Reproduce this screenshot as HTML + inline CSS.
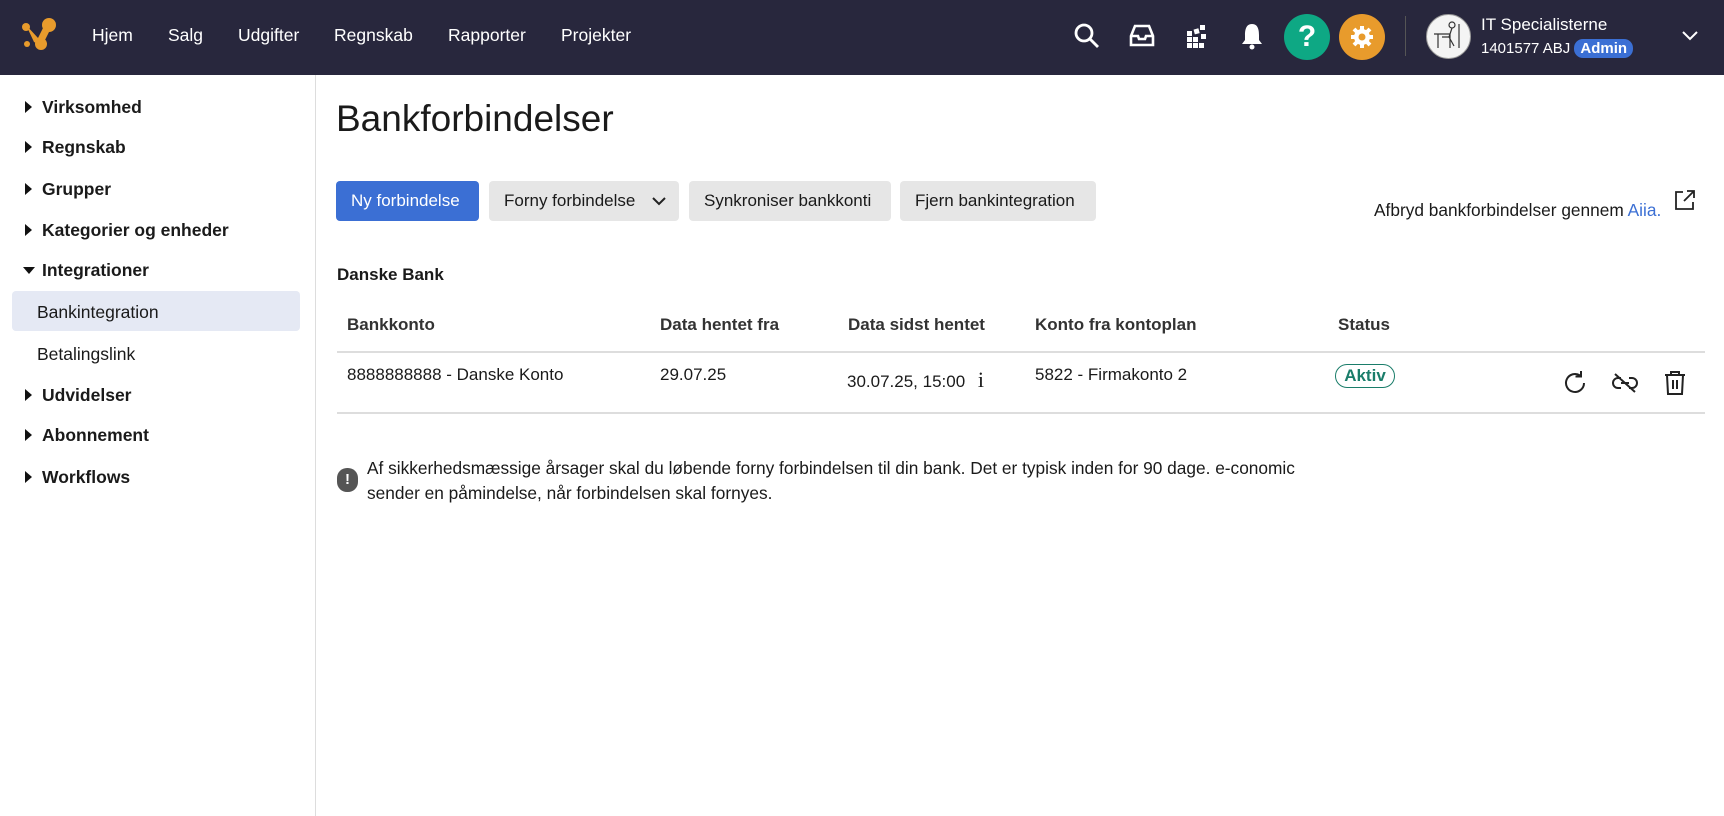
<!DOCTYPE html>
<html><head><meta charset="utf-8"><style>
*{box-sizing:border-box;margin:0;padding:0}
body{width:1724px;height:816px;overflow:hidden;background:#fff;font-family:"Liberation Sans",Arial,sans-serif;color:#1a1a1a;position:relative}
.hdr{position:absolute;left:0;top:0;width:1724px;height:75px;background:#28273d}
.abs{position:absolute;white-space:nowrap}
.nav{color:#fff;font-size:17.5px;top:25px}
.side{position:absolute;left:0;top:75px;width:316px;height:741px;border-right:1px solid #ddd}
.si{position:absolute;left:42px;font-size:17.5px;font-weight:bold}
.tri{position:absolute;left:25px;width:0;height:0;border-top:6px solid transparent;border-bottom:6px solid transparent;border-left:7px solid #111}
.btn{position:absolute;top:181px;height:40px;border-radius:4px;background:#e6e6e6;font-size:17px;line-height:40px;padding-left:15px;color:#1a1a1a}
.th{position:absolute;top:315px;font-size:17px;font-weight:bold;color:#333}
.td{position:absolute;top:365px;font-size:17px}
</style></head><body>
<div class="hdr">
<svg class="abs" style="left:20px;top:16px" width="40" height="40" viewBox="0 0 40 40"><g fill="#e89b2c"><circle cx="29" cy="9" r="7"/><circle cx="21" cy="28" r="6"/><circle cx="6" cy="11" r="4"/><circle cx="7" cy="28" r="3"/><path d="M6 9 L18 22 L26 6 L31 12 L22 30 L14 26 Z"/></g></svg>
<div class="abs nav" style="left:92px">Hjem</div>
<div class="abs nav" style="left:168px">Salg</div>
<div class="abs nav" style="left:238px">Udgifter</div>
<div class="abs nav" style="left:334px">Regnskab</div>
<div class="abs nav" style="left:448px">Rapporter</div>
<div class="abs nav" style="left:561px">Projekter</div>
<svg class="abs" style="left:1074px;top:23px" width="26" height="26" viewBox="0 0 26 26" fill="none" stroke="#fff" stroke-width="2.8"><circle cx="10" cy="10" r="8"/><path d="M16 16 L24 24"/></svg>
<svg class="abs" style="left:1129px;top:24px" width="26" height="24" viewBox="0 0 26 24" fill="none" stroke="#fff" stroke-width="2.6"><path d="M6 2 H20 L24 12 V21 H2 V12 Z M2 12 H9 L10 15 H16 L17 12 H24"/></svg>
<svg class="abs" style="left:1186px;top:24px" width="24" height="26" viewBox="0 0 24 26" fill="#fff"><rect x="1" y="7" width="5" height="5"/><rect x="1" y="13" width="5" height="5"/><rect x="1" y="19" width="5" height="5"/><rect x="7" y="13" width="5" height="5"/><rect x="7" y="19" width="5" height="5"/><rect x="13" y="19" width="5" height="5"/><rect x="8" y="5" width="5" height="5" transform="rotate(-15 10 7)"/><rect x="14" y="1" width="5" height="5"/><rect x="15" y="10" width="5" height="5"/></svg>
<svg class="abs" style="left:1241px;top:22px" width="22" height="28" viewBox="0 0 22 28" fill="#fff"><path d="M11 2 C5 2 4 8 4 13 V18 L1 22 H21 L18 18 V13 C18 8 17 2 11 2Z"/><circle cx="11" cy="25" r="2.5"/></svg>
<div class="abs" style="left:1284px;top:14px;width:46px;height:46px;border-radius:50%;background:#0ea884;color:#fff;font-weight:bold;font-size:30px;text-align:center;line-height:46px">?</div>
<div class="abs" style="left:1339px;top:14px;width:46px;height:46px;border-radius:50%;background:#e89b2c"></div>
<svg class="abs" style="left:1350px;top:25px" width="24" height="24" viewBox="0 0 24 24"><g fill="#fff"><circle cx="12" cy="12" r="8"/><g stroke="#fff" stroke-width="4"><path d="M12 1V23M1 12H23M4 4L20 20M20 4L4 20"/></g></g><circle cx="12" cy="12" r="3.5" fill="#e89b2c"/></svg>
<div class="abs" style="left:1405px;top:16px;width:1px;height:40px;background:#555"></div>
<div class="abs" style="left:1426px;top:14px;width:45px;height:45px;border-radius:50%;background:#f4f4f4;border:1px solid #999"></div>
<svg class="abs" style="left:1432px;top:20px" width="34" height="30" viewBox="0 0 34 30" fill="none" stroke="#333" stroke-width="1.2"><circle cx="20" cy="5" r="3"/><path d="M20 8 L17 17 H10 M17 17 L22 26 M2 14 H18 V28 M27 4 V28 M6 14 V28"/></svg>
<div class="abs" style="left:1481px;top:15px;color:#fff;font-size:17px">IT Specialisterne</div>
<div class="abs" style="left:1481px;top:40px;color:#fff;font-size:15px">1401577 ABJ <span style="background:#3b6fd4;border-radius:9px;padding:1px 6px;font-weight:bold">Admin</span></div>
<svg class="abs" style="left:1681px;top:30px" width="18" height="12" viewBox="0 0 18 12" fill="none" stroke="#fff" stroke-width="2"><path d="M2 2 L9 9 L16 2"/></svg>
</div>
<div class="side">
<div class="tri" style="top:26px"></div><div class="si" style="top:22px">Virksomhed</div>
<div class="tri" style="top:66px"></div><div class="si" style="top:62px">Regnskab</div>
<div class="tri" style="top:108px"></div><div class="si" style="top:104px">Grupper</div>
<div class="tri" style="top:149px"></div><div class="si" style="top:145px">Kategorier og enheder</div>
<div style="position:absolute;left:23px;top:192px;border-left:6px solid transparent;border-right:6px solid transparent;border-top:7px solid #111"></div><div class="si" style="top:185px">Integrationer</div>
<div style="position:absolute;left:12px;top:216px;width:288px;height:40px;border-radius:4px;background:#e5e9f4"></div>
<div class="si" style="top:227px;left:37px;font-weight:normal">Bankintegration</div>
<div class="si" style="top:269px;left:37px;font-weight:normal">Betalingslink</div>
<div class="tri" style="top:314px"></div><div class="si" style="top:310px">Udvidelser</div>
<div class="tri" style="top:354px"></div><div class="si" style="top:350px">Abonnement</div>
<div class="tri" style="top:396px"></div><div class="si" style="top:392px">Workflows</div>
</div>
<div class="abs" style="left:336px;top:98px;font-size:37px">Bankforbindelser</div>
<div class="btn" style="left:336px;width:143px;background:#3b6fd4;color:#fff">Ny forbindelse</div>
<div class="btn" style="left:489px;width:190px">Forny forbindelse<svg style="position:absolute;right:12px;top:15px" width="16" height="10" viewBox="0 0 16 10" fill="none" stroke="#222" stroke-width="2"><path d="M2 2 L8 8 L14 2"/></svg></div>
<div class="btn" style="left:689px;width:202px">Synkroniser bankkonti</div>
<div class="btn" style="left:900px;width:196px">Fjern bankintegration</div>
<div class="abs" style="left:1374px;top:200px;font-size:17.3px">Afbryd bankforbindelser gennem <span style="color:#3b6fd4">Aiia.</span></div>
<svg class="abs" style="left:1674px;top:189px" width="22" height="22" viewBox="0 0 22 22" fill="none" stroke="#222" stroke-width="1.8"><path d="M9 3H2V20H19V13M13 2H20V9M20 2L10 12"/></svg>
<div class="abs" style="left:337px;top:265px;font-size:17px;font-weight:bold">Danske Bank</div>
<div class="th" style="left:347px">Bankkonto</div>
<div class="th" style="left:660px">Data hentet fra</div>
<div class="th" style="left:848px">Data sidst hentet</div>
<div class="th" style="left:1035px">Konto fra kontoplan</div>
<div class="th" style="left:1338px">Status</div>
<div class="abs" style="left:337px;top:351px;width:1368px;height:2px;background:#ddd"></div>
<div class="td" style="left:347px">8888888888 - Danske Konto</div>
<div class="td" style="left:660px">29.07.25</div>
<div class="td" style="left:847px;top:367px">30.07.25, 15:00 <span style="font-family:'Liberation Serif',serif;font-size:22px;margin-left:8px">i</span></div>
<div class="td" style="left:1035px">5822 - Firmakonto 2</div>
<div class="abs" style="left:1335px;top:364px;width:60px;height:24px;border:1.5px solid #1a7d6a;border-radius:12px;color:#1a7d6a;font-weight:bold;font-size:17px;text-align:center;line-height:21px">Aktiv</div>
<svg class="abs" style="left:1562px;top:370px" width="26" height="26" viewBox="0 0 26 26" fill="none" stroke="#222" stroke-width="2"><path d="M22 13A9 9 0 1 1 18 5.5M19 1V6.5H13.5"/></svg>
<svg class="abs" style="left:1611px;top:371px" width="28" height="24" viewBox="0 0 28 24" fill="none" stroke="#222" stroke-width="2"><path d="M10 7H7a5 5 0 0 0 0 10h3M18 7h3a5 5 0 0 1 0 10h-3M10 12h8M4 3L24 21"/></svg>
<svg class="abs" style="left:1663px;top:369px" width="24" height="28" viewBox="0 0 24 28" fill="none" stroke="#222" stroke-width="2"><path d="M2 6H22M8 6V3H16V6M4 6L5 25H19L20 6M10 11V20M14 11V20"/></svg>
<div class="abs" style="left:337px;top:412px;width:1368px;height:2px;background:#ddd"></div>
<div class="abs" style="left:337px;top:468px;width:21px;height:24px;border-radius:10px;background:#555;color:#fff;font-weight:bold;text-align:center;font-size:15px;line-height:24px">!</div>
<div class="abs" style="left:367px;top:456px;font-size:17.3px;line-height:25px">Af sikkerhedsmæssige årsager skal du løbende forny forbindelsen til din bank. Det er typisk inden for 90 dage. e-conomic<br>sender en påmindelse, når forbindelsen skal fornyes.</div>
</body></html>
